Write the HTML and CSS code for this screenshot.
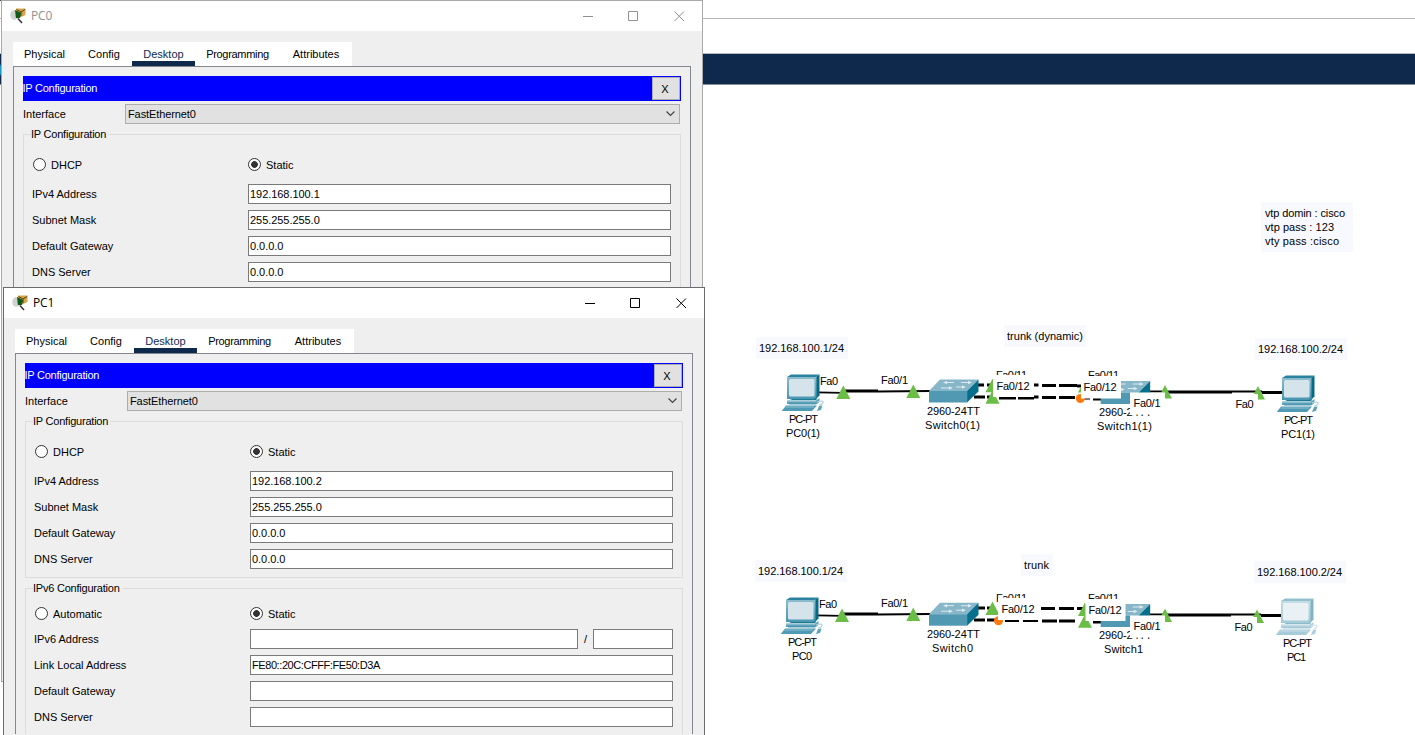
FILE: index.html
```html
<!DOCTYPE html>
<html lang="en">
<head>
<meta charset="utf-8">
<title>Packet Tracer</title>
<link rel="stylesheet" href="styles.css">
</head>
<body>
<div class="app">
  <div class="app-edge"></div>
  <div class="app-menu"></div>
  <div class="app-toolbar"><span class="tool-dot"></span></div>
</div>

<svg class="canvas" width="1415" height="735" viewBox="0 0 1415 735">
  <defs>
    <linearGradient id="face" x1="0" y1="0" x2="0" y2="1"><stop offset="0" stop-color="#8cbccb"/><stop offset="1" stop-color="#4896b1"/></linearGradient>
    <symbol id="pc" overflow="visible">
      <path d="M6 3 10 .500H38.500L35 3Z" fill="#2a829f"/>
      <path d="M35 3 38.500 .500V21.500L35 25Z" fill="#066a86"/>
      <rect x="6" y="3" width="29.500" height="22" fill="url(#face)"/>
      <rect x="8" y="5" width="25.500" height="17.500" rx="1.500" fill="#d4e4ea"/>
      <path d="M11 25H33L35.500 23.500V26H9Z" fill="#1d7893"/>
      <path d="M6 26.500H35L38.500 24V27L35 30H6Z" fill="#5fa3bb"/>
      <path d="M6 27.200H35" stroke="#a6cbd7" stroke-width=".8"/>
      <path d="M8 30H35L38 28" fill="none" stroke="#2f86a3" stroke-width=".8"/>
      <path d="M5 31.500H36L31 37H.8Z" fill="#4f9ab5"/>
      <path d="M4.500 33H33" stroke="#8fc0cf"/>
      <path d="M36 28Q43 26 42 28.500T38 31" fill="none" stroke="#b5d5df" stroke-width="1.200"/>
      <path d="M38 32 41.500 31.500 40 36 36 37Z" fill="#5fa3bb"/>
    </symbol>
    <symbol id="switch" overflow="visible">
      <path d="M0 11.500 11 0H49.500L38 11.500Z" fill="#86b6c7"/>
      <path d="M38 11.500 49.500 0V12L38 23Z" fill="#066f8b"/>
      <rect y="11.500" width="38.300" height="11.500" fill="#5199b2"/>
      <path d="M17 3H25M32 3H40M12 8.500H21M27 7.500H34" stroke="#dcebf0"/>
      <path d="M14 3 18 1.300V4.700ZM43 3 39 1.300V4.700ZM24 8.500 20 6.800V10.200ZM37 7.500 33 5.800V9.200Z" fill="#dcebf0"/>
    </symbol>
    <symbol id="up" overflow="visible"><path d="M0 0 7 13.500H-7Z" fill="#6abd45"/></symbol>
  </defs>

  <g class="note-bg">
    <rect x="1261" y="202" width="92" height="50"/>
    <rect x="756" y="337" width="92" height="22"/>
    <rect x="1004" y="325" width="82" height="22"/>
    <rect x="1255" y="338" width="92" height="22"/>
    <rect x="755" y="560" width="92" height="22"/>
    <rect x="1021" y="554" width="32" height="22"/>
    <rect x="1254" y="561" width="92" height="22"/>
  </g>
  <g class="t">
    <text x="1265" y="217" textLength="80">vtp domin : cisco</text>
    <text x="1265" y="231" textLength="69">vtp pass : 123</text>
    <text x="1265" y="245" textLength="74">vty pass :cisco</text>
    <text x="759" y="352" textLength="85">192.168.100.1/24</text>
    <text x="1007" y="340" textLength="76">trunk (dynamic)</text>
    <text x="1258" y="353" textLength="85">192.168.100.2/24</text>
    <text x="758" y="575" textLength="85">192.168.100.1/24</text>
    <text x="1024" y="569" textLength="25">trunk</text>
    <text x="1257" y="576" textLength="85">192.168.100.2/24</text>
  </g>

  <!-- upper link row -->
  <g class="wire">
    <path class="mid" d="M817 392.300 843 392.800M878 391.500 930 391"/>
    <path class="fat" d="M843 391H878"/>
    <path class="mid" d="M1148 391.500H1166M1232 391.500H1262"/>
    <path class="fat" d="M1166 392H1232M1262 392.500H1282"/>
    <path class="fat" d="M978 385H984M987 385H994M1034 385H1038.500M1042 385.500H1056M1059 385.500H1077M1077 386H1082"/>
    <path class="fat" d="M974 397H985M987 397H995M999 398H1016M1018 398H1034M1034 397H1038.500M1042 397.500H1056M1059 397.500H1075M1084 398H1090M1093 399H1101"/>
  </g>
  <use href="#pc" x="781" y="374"/>
  <use href="#switch" x="929" y="379.500"/>
  <use href="#switch" x="1100.700" y="381"/>
  <use href="#pc" x="1276" y="375"/>
  <use href="#up" x="843.300" y="385.500"/>
  <use href="#up" x="913.300" y="384.500"/>
  <use href="#up" x="992.500" y="378.700"/>
  <use href="#up" x="992.500" y="390.300"/>
  <use href="#up" x="1085" y="379"/>
  <circle cx="1080.300" cy="398.500" r="4.500" fill="#ff7a0e"/>
  <use href="#up" x="1165" y="385"/>
  <use href="#up" x="1258" y="386"/>
  <g class="t">
    <text x="820" y="385" textLength="18">Fa0</text>
    <text x="881" y="384" textLength="27">Fa0/1</text>
    <text x="996" y="379" textLength="31">Fa0/11</text>
    <text x="1088" y="379" textLength="31">Fa0/11</text>
    <text x="927" y="415" textLength="53">2960-24TT</text>
    <text x="1099" y="416" textLength="53">2960-24TT</text>
    <text x="925" y="429" textLength="55">Switch0(1)</text>
    <text x="1097" y="430" textLength="55">Switch1(1)</text>
    <text x="789" y="423" textLength="29">PC-PT</text>
    <text x="786" y="437" textLength="34">PC0(1)</text>
    <text x="1284" y="424" textLength="29">PC-PT</text>
    <text x="1281" y="438" textLength="34">PC1(1)</text>
  </g>
  <g fill="#fff">
    <rect x="993" y="375" width="41" height="22"/>
    <rect x="1081" y="376" width="40" height="22.500"/>
    <rect x="1130" y="392.500" width="35" height="22"/>
    <rect x="1232" y="394" width="26" height="18"/>
  </g>
  <g class="t">
    <text x="996.500" y="390" textLength="33">Fa0/12</text>
    <text x="1083.500" y="391" textLength="33">Fa0/12</text>
    <text x="1133.500" y="407" textLength="27">Fa0/1</text>
    <text x="1235.500" y="408" textLength="18">Fa0</text>
  </g>

  <!-- lower link row -->
  <g class="wire">
    <path class="mid" d="M816 615.300 843 615.800M878 614.500 930 614"/>
    <path class="fat" d="M843 614H878"/>
    <path class="mid" d="M1148 614.500H1166M1231 614.500H1261"/>
    <path class="fat" d="M1166 615H1231M1261 615.500H1281"/>
    <path class="fat" d="M978 608H985M987 608H994M1041 608.500H1055M1059 608.500H1074M1077 608.500H1083"/>
    <path class="fat" d="M974 620H985M987 620H996M1005 620.500H1019M1023 620.500H1038M1042 621H1057M1059 621H1075M1093 622H1101"/>
  </g>
  <use href="#pc" x="780" y="597"/>
  <use href="#switch" x="929" y="602.700"/>
  <use href="#switch" x="1100.700" y="604"/>
  <use href="#pc" x="1275" y="598" opacity=".5"/>
  <use href="#up" x="842" y="608.500"/>
  <use href="#up" x="913.300" y="607.500"/>
  <use href="#up" x="992.500" y="601.500"/>
  <circle cx="998.500" cy="620.700" r="4.500" fill="#ff7a0e"/>
  <use href="#up" x="1085" y="602.500"/>
  <use href="#up" x="1085" y="614.200"/>
  <use href="#up" x="1165" y="608.500"/>
  <use href="#up" x="1257" y="609.500"/>
  <g class="t">
    <text x="819" y="608" textLength="18">Fa0</text>
    <text x="881" y="607" textLength="27">Fa0/1</text>
    <text x="996" y="602" textLength="31">Fa0/11</text>
    <text x="1088" y="602" textLength="31">Fa0/11</text>
    <text x="927" y="638" textLength="53">2960-24TT</text>
    <text x="1099" y="639" textLength="53">2960-24TT</text>
    <text x="932" y="652" textLength="41">Switch0</text>
    <text x="1104" y="653" textLength="39">Switch1</text>
    <text x="788" y="646" textLength="29">PC-PT</text>
    <text x="792" y="660" textLength="20">PC0</text>
    <text x="1283" y="647" textLength="29">PC-PT</text>
    <text x="1287" y="661" textLength="19">PC1</text>
  </g>
  <g fill="#fff">
    <rect x="998" y="598" width="41" height="22"/>
    <rect x="1085.500" y="599" width="40" height="22"/>
    <rect x="1130" y="615.500" width="35" height="22"/>
    <rect x="1231" y="617" width="26" height="18"/>
  </g>
  <g class="t">
    <text x="1001.500" y="613" textLength="33">Fa0/12</text>
    <text x="1088.500" y="614" textLength="33">Fa0/12</text>
    <text x="1133.500" y="630" textLength="27">Fa0/1</text>
    <text x="1234.500" y="631" textLength="18">Fa0</text>
  </g>
</svg>

<section class="window window-back">
  <header class="titlebar">
    <svg class="app-icon" viewBox="0 0 16 16"><ellipse cx="4.500" cy="7" rx="4.300" ry="5" fill="#d0d4d0"/><path d="M6 .500H15.500V7L10 9.500H5.500Z" fill="#d3a548"/><path d="M6.500 1.500 11 4 15 1.500M11 4V8" fill="none" stroke="#5b4316"/><path d="M5 2 11 5 10 10H6Z" fill="#0d5a1c"/><path d="M8 10.500 12 15" stroke="#333" stroke-width="1.500"/></svg>
    <span class="title">PC0</span>
    <svg class="controls" width="104" height="14" viewBox="0 0 104 14"><path d="M0 7.500H10M45.500 2.500H54.500V11.500H45.500ZM91.500 2.500 101 12M101 2.500 91.500 12" fill="none" stroke="currentColor"/></svg>
  </header>
  <nav class="tabs"><span class="w63">Physical</span><span class="w56">Config</span><span class="w63 active">Desktop</span><span class="w85">Programming</span><span class="w72">Attributes</span></nav>
  <div class="page">
    <div class="banner"><span>IP Configuration</span><button>X</button></div>
    <div class="iface"><span>Interface</span><div class="select">FastEthernet0<svg width="9" height="6" viewBox="0 0 9 6"><path d="M.5.5 4.500 4.500 8.500.5" fill="none" stroke="#444" stroke-width="1.200"/></svg></div></div>
    <div class="group v4">
      <span class="legend">IP Configuration</span>
      <div class="row radios"><span class="opt"><i></i>DHCP</span><span class="opt on"><i></i>Static</span></div>
      <div class="row"><span>IPv4 Address</span><div class="field">192.168.100.1</div></div>
      <div class="row"><span>Subnet Mask</span><div class="field">255.255.255.0</div></div>
      <div class="row"><span>Default Gateway</span><div class="field">0.0.0.0</div></div>
      <div class="row"><span>DNS Server</span><div class="field">0.0.0.0</div></div>
    </div>
  </div>
</section>

<section class="window window-front">
  <header class="titlebar">
    <svg class="app-icon" viewBox="0 0 16 16"><ellipse cx="4.500" cy="7" rx="4.300" ry="5" fill="#d0d4d0"/><path d="M6 .500H15.500V7L10 9.500H5.500Z" fill="#d3a548"/><path d="M6.500 1.500 11 4 15 1.500M11 4V8" fill="none" stroke="#5b4316"/><path d="M5 2 11 5 10 10H6Z" fill="#0d5a1c"/><path d="M8 10.500 12 15" stroke="#333" stroke-width="1.500"/></svg>
    <span class="title">PC1</span>
    <svg class="controls" width="104" height="14" viewBox="0 0 104 14"><path d="M0 7.500H10M45.500 2.500H54.500V11.500H45.500ZM91.500 2.500 101 12M101 2.500 91.500 12" fill="none" stroke="currentColor"/></svg>
  </header>
  <nav class="tabs"><span class="w63">Physical</span><span class="w56">Config</span><span class="w63 active">Desktop</span><span class="w85">Programming</span><span class="w72">Attributes</span></nav>
  <div class="page">
    <div class="banner"><span>IP Configuration</span><button>X</button></div>
    <div class="iface"><span>Interface</span><div class="select">FastEthernet0<svg width="9" height="6" viewBox="0 0 9 6"><path d="M.5.5 4.500 4.500 8.500.5" fill="none" stroke="#444" stroke-width="1.200"/></svg></div></div>
    <div class="group v4">
      <span class="legend">IP Configuration</span>
      <div class="row radios"><span class="opt"><i></i>DHCP</span><span class="opt on"><i></i>Static</span></div>
      <div class="row"><span>IPv4 Address</span><div class="field">192.168.100.2</div></div>
      <div class="row"><span>Subnet Mask</span><div class="field">255.255.255.0</div></div>
      <div class="row"><span>Default Gateway</span><div class="field">0.0.0.0</div></div>
      <div class="row"><span>DNS Server</span><div class="field">0.0.0.0</div></div>
    </div>
    <div class="group v6">
      <span class="legend">IPv6 Configuration</span>
      <div class="row radios"><span class="opt"><i></i>Automatic</span><span class="opt on"><i></i>Static</span></div>
      <div class="row"><span>IPv6 Address</span><div class="split"><div class="field"></div><span>/</span><div class="field"></div></div></div>
      <div class="row"><span>Link Local Address</span><div class="field hex">FE80::20C:CFFF:FE50:D3A</div></div>
      <div class="row"><span>Default Gateway</span><div class="field"></div></div>
      <div class="row"><span>DNS Server</span><div class="field"></div></div>
    </div>
  </div>
</section>
</body>
</html>
```
FILE: styles.css
```css
* { box-sizing: border-box; }
body {
  margin: 0;
  width: 1415px;
  height: 735px;
  position: relative;
  overflow: hidden;
  background: #fff;
  color: #000;
  font: 11px/14px "Liberation Sans", Arial, sans-serif;
}

/* application behind the dialogs */
.app-edge {
  width: 525px;
  height: 1px;
  background: repeating-linear-gradient(90deg, #444 0 23px, #888 23px 27px, #555 27px 51px, #aaa 51px 53px);
}
.app-menu {
  height: 53px;
  background: linear-gradient(#b8b8b8, #b8b8b8) 0 17px / 100% 1px no-repeat #fff;
  border-bottom: 1px solid #b8bcc4;
}
.app-toolbar {
  height: 31px;
  background: #0f294d;
  border-bottom: 1px solid #868b96;
  overflow: hidden;
}
.tool-dot {
  display: block;
  width: 20px;
  height: 20px;
  margin: 6px 0 0 -18px;
  border-radius: 50%;
  background: #1a9bd0;
}

/* topology drawing */
.canvas { position: absolute; left: 0; top: 0; }
.note-bg { fill: #f8f9ff; }
.wire { fill: none; stroke: #000; }
.mid { stroke-width: 1.800; }
.fat { stroke-width: 2.800; }

/* dialogs */
.window {
  position: absolute;
  width: 702px;
  height: 682px;
  overflow: hidden;
  background: #efefef;
  border: 1px solid #a9a9a9;
}
.window-back { left: 1px; top: 0; }
.window-front {
  left: 3px;
  top: 287px;
  height: 448px;
  border-color: #6b6b6b;
  border-bottom: 0;
}
.titlebar {
  display: flex;
  align-items: center;
  height: 30px;
  padding: 0 15px 0 8px;
  background: #fff;
}
.app-icon { width: 16px; height: 16px; }
.title {
  margin-left: 5px;
  font: 12px/16px "Open Sans", "Noto Sans", sans-serif;
  letter-spacing: -0.1px;
}
.controls { margin: 0 0 1px auto; }
.window-back .titlebar { color: #8f8f8f; }
.tabs {
  display: flex;
  width: 339px;
  height: 24px;
  margin: 11px 0 0 11px;
  background: #fff;
}
.tabs span {
  height: 24px;
  padding-top: 5px;
  text-align: center;
}
.w56 { width: 56px; }
.w63 { width: 63px; }
.w72 { width: 72px; }
.w85 { width: 85px; letter-spacing: -0.3px; }
.tabs .active { color: #0f294d; border-bottom: 5px solid #0f294d; }
.page {
  width: 678px;
  height: 640px;
  margin-left: 11px;
  padding: 9px;
  border: 1px solid #828790;
}
.window-front .page { height: 381px; border-bottom: 0; padding-bottom: 0; overflow: hidden; }
.banner {
  display: flex;
  justify-content: space-between;
  align-items: center;
  height: 25px;
  padding-right: 1px;
  background: #00f;
  color: #fff;
}
.banner span { margin: -1px 0 0 -0.5px; letter-spacing: -0.25px; }
.banner button {
  width: 28px;
  height: 23px;
  padding: 0 2px 0 0;
  border: 1px solid #adadad;
  background: #e1e1e1;
  color: #000;
  font: inherit;
}
.iface {
  display: grid;
  grid-template-columns: 102px 555px;
  align-items: center;
  margin-top: 3px;
}
.select {
  display: flex;
  justify-content: space-between;
  align-items: center;
  height: 20px;
  padding: 0 4px 0 2px;
  border: 1px solid #adadad;
  background: #e1e1e1;
  letter-spacing: -0.1px;
}
.group {
  display: flex;
  flex-direction: column;
  gap: 6px;
  height: 157px;
  margin-top: 10px;
  padding-left: 8px;
  border: 1px solid #dcdcdc;
  position: relative;
}
.legend {
  position: absolute;
  left: 7px;
  top: -8px;
  padding-right: 2px;
  background: #efefef;
  letter-spacing: -0.22px;
}
.row {
  display: grid;
  grid-template-columns: 216px 423px;
  align-items: center;
}
.radios { height: 13px; }
.v4 .radios { margin: 23px 0 7px; }
.v6 { height: 148px; border-bottom: 0; }
.v6 .radios { margin: 18px 0 3px; }
.opt { display: flex; align-items: center; gap: 5px; height: 13px; }
.opt i {
  width: 13px;
  height: 13px;
  margin-left: 1px;
  border: 1px solid #333;
  border-radius: 50%;
  background: #fff;
}
.opt.on i {
  margin-left: 0;
  background: radial-gradient(circle, #333 0 3px, #fff 3.700px);
}
.field {
  height: 20px;
  padding: 2px 1px;
  border: 1px solid #7a7a7a;
  background: #fff;
  letter-spacing: -0.05px;
}
.hex { letter-spacing: -0.42px; }
.split {
  display: grid;
  grid-template-columns: 328px 15px 80px;
  align-items: center;
  text-align: center;
}
```
